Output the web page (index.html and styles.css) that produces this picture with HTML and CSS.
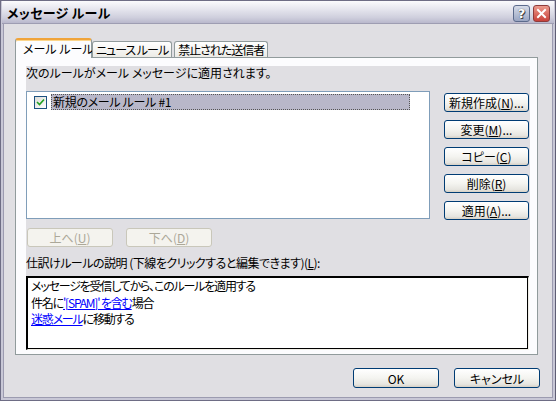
FILE: index.html
```html
<!DOCTYPE html>
<html lang="ja">
<head>
<meta charset="utf-8">
<link rel="stylesheet" href="styles.css">
</head>
<body>
<div class="window">
  <div class="titlebar">
    <span class="title">メッセージ ルール</span>
    <div class="tbtns">
      <span class="tb help">?</span>
      <span class="tb close"><svg width="17" height="17" viewBox="0 0 17 17"><path d="M4.5 4.5 L12.5 12.5 M12.5 4.5 L4.5 12.5" stroke="#fff" stroke-width="2.2" stroke-linecap="square"/></svg></span>
    </div>
  </div>
  <div class="client">
    <div class="tabs">
      <div class="tab active">メール ルール</div>
      <div class="tab">ニュース&nbsp;ルール</div>
      <div class="tab">禁止された送信者</div>
    </div>
    <div class="panel">
      <div class="grayarea">
        <div class="label">次のルールがメール メッセージに適用されます。</div>
        <div class="mainrow">
          <div class="listbox">
            <div class="item">
              <span class="check"><svg width="11" height="11" viewBox="0 0 11 11"><path d="M2 5 L4.5 7.5 L9 2.5" fill="none" stroke="#21a121" stroke-width="1.6"/></svg></span>
              <span class="itemtext">新規のメール ルール #1</span>
            </div>
          </div>
          <div class="sidebtns">
            <button class="btn">新規作成(<u>N</u>)...</button>
            <button class="btn">変更(<u>M</u>)...</button>
            <button class="btn">コピー(<u>C</u>)</button>
            <button class="btn">削除(<u>R</u>)</button>
            <button class="btn">適用(<u>A</u>)...</button>
          </div>
        </div>
        <div class="updown">
          <button class="btn disabled">上へ(<u>U</u>)</button>
          <button class="btn disabled">下へ(<u>D</u>)</button>
        </div>
        <div class="label desc">仕訳けルールの説明 (下線をクリックすると編集できます)(<u>L</u>):</div>
      </div>
      <div class="textbox">
        <div>メッセージを受信してから、このルールを適用する</div>
        <div>件名に<a class="lnk">'[SPAM]' を含む</a>場合</div>
        <div><a class="lnk">迷惑メール</a>に移動する</div>
      </div>
    </div>
    <div class="footer">
      <button class="btn wide">OK</button>
      <button class="btn wide">キャンセル</button>
    </div>
  </div>
</div>
</body>
</html>
```
FILE: styles.css
```css
html, body {
  margin: 0;
  padding: 0;
  background: #e0dfe3;
}
body {
  font-family: "Noto Sans CJK JP", "Noto Sans", sans-serif;
  font-size: 12px;
  font-feature-settings: "palt";
  color: #000;
}
.window {
  width: 556px;
  height: 401px;
  box-sizing: border-box;
  border: 1px solid #6e6d85;
  border-right-color: #5f5e74;
  box-shadow: inset 0 0 0 2px #c8c7d6, inset 0 0 0 3px #9c9bb0;
  background: #e0dfe3;
  display: flex;
  flex-direction: column;
}
.titlebar {
  height: 22px;
  margin: 0 1px;
  padding: 0 4px 0 5px;
  background: linear-gradient(#fbfbfd 0%, #e7e7ef 35%, #cfcfdd 75%, #b9b8cc 100%);
  border-bottom: 1px solid #9e9db2;
  display: flex;
  align-items: center;
  justify-content: space-between;
}
.title {
  font-weight: bold;
  font-size: 13px;
  letter-spacing: 0.3px;
  color: #000;
  margin-top: 1px;
}
.tbtns {
  display: flex;
  gap: 3px;
  margin-top: 3px;
}
.tb {
  width: 17px;
  height: 17px;
  box-sizing: border-box;
  border-radius: 3px;
  display: flex;
  align-items: center;
  justify-content: center;
}
.help {
  border: 1px solid #5c6b8c;
  background: linear-gradient(#d6dbe8, #9aa6c2);
  color: #fff;
  font-family: "DejaVu Sans", sans-serif;
  font-weight: bold;
  font-size: 13px;
  text-shadow: 0 0 1px #333, 1px 1px 0 #444;
}
.close {
  border: 1px solid #8e3b3b;
  background: linear-gradient(#ec9a8c, #c8413a);
}
.client {
  flex: 1;
  padding: 13px 0 0 14px;
}
.tabs {
  display: flex;
  align-items: flex-end;
  height: 20px;
  position: relative;
  z-index: 2;
}
.tab {
  height: 16px;
  box-sizing: border-box;
  border: 1px solid #919b9c;
  border-bottom: none;
  border-radius: 3px 3px 0 0;
  background: linear-gradient(#ffffff, #ecebe6);
  padding: 0 3px;
  letter-spacing: -1px;
  line-height: 15px;
  margin-right: 2px;
  white-space: nowrap;
}
.tab.active {
  height: 20px;
  width: 77px;
  background: #fcfcfe;
  border-top: 2px solid #f0a43a;
  box-shadow: inset 0 1px 0 #fcd58a;
  line-height: 18px;
  padding-left: 7px;
  letter-spacing: 0;
  margin-bottom: -1px;
  margin-right: 0;
}
.panel {
  width: 523px;
  height: 298px;
  box-sizing: border-box;
  border: 1px solid #919b9c;
  background: #fcfcfe;
  padding: 8px 7px 0 10px;
  position: relative;
  z-index: 1;
}
.grayarea {
  background: #e0dfe3;
  height: 210px;
  display: flex;
  flex-direction: column;
}
.label {
  height: 14px;
  line-height: 14px;
  white-space: nowrap;
  margin-top: 0;
}
.mainrow {
  display: flex;
  margin-top: 11px;
}
.listbox {
  width: 404px;
  height: 128px;
  box-sizing: border-box;
  border: 1px solid #7f9db9;
  background: #fff;
  padding: 2px 0 0 0;
}
.item {
  display: flex;
  align-items: center;
  height: 16px;
}
.check {
  width: 13px;
  height: 13px;
  box-sizing: border-box;
  border: 1px solid #1c5180;
  background: linear-gradient(135deg, #dcdcd7, #fff);
  margin-left: 7px;
  display: flex;
  align-items: center;
  justify-content: center;
}
.itemtext {
  margin-left: 4px;
  width: 359px;
  height: 16px;
  box-sizing: border-box;
  background: #b8b7c9;
  border: 1px dotted #555;
  line-height: 14px;
  padding-left: 1px;
  letter-spacing: -0.3px;
}
.sidebtns {
  display: flex;
  flex-direction: column;
  gap: 8px;
  margin-left: 14px;
  margin-top: 2px;
}
.btn {
  font-family: "Noto Sans CJK JP", "Noto Sans", sans-serif;
  font-size: 12px;
  font-feature-settings: "palt";
  width: 85px;
  height: 19px;
  padding: 0;
  line-height: 15px;
  box-sizing: border-box;
  border: 1px solid #003c74;
  border-radius: 3px;
  background: linear-gradient(#ffffff 0%, #f4f4f0 50%, #e6e5e0 85%, #d6d0c5 100%);
  color: #000;
  white-space: nowrap;
}
.updown {
  display: flex;
  gap: 13px;
  margin-top: 8px;
  margin-left: 1px;
}
.btn.disabled {
  width: 86px;
  border-color: #c9c7ba;
  background: #f4f3ee;
  color: #aca899;
}
.desc {
  margin-top: 9px;
  letter-spacing: -0.5px;
}
.textbox {
  width: 503px;
  height: 74px;
  box-sizing: border-box;
  background: #fff;
  padding: 0 3px;
  line-height: 16.5px;
  letter-spacing: -1.2px;
  border-style: solid;
  border-width: 2px 1px 1px 2px;
  border-color: #000 #f0eee6 #f0eee6 #000;
  box-shadow: inset -1px -1px 0 #000;
}
.lnk {
  color: #0000ff;
  text-decoration: underline;
}
.footer {
  display: flex;
  justify-content: flex-end;
  gap: 15px;
  padding: 13px 15px 0 0;
}
.btn.wide {
  width: 86px;
  height: 20px;
}
```
